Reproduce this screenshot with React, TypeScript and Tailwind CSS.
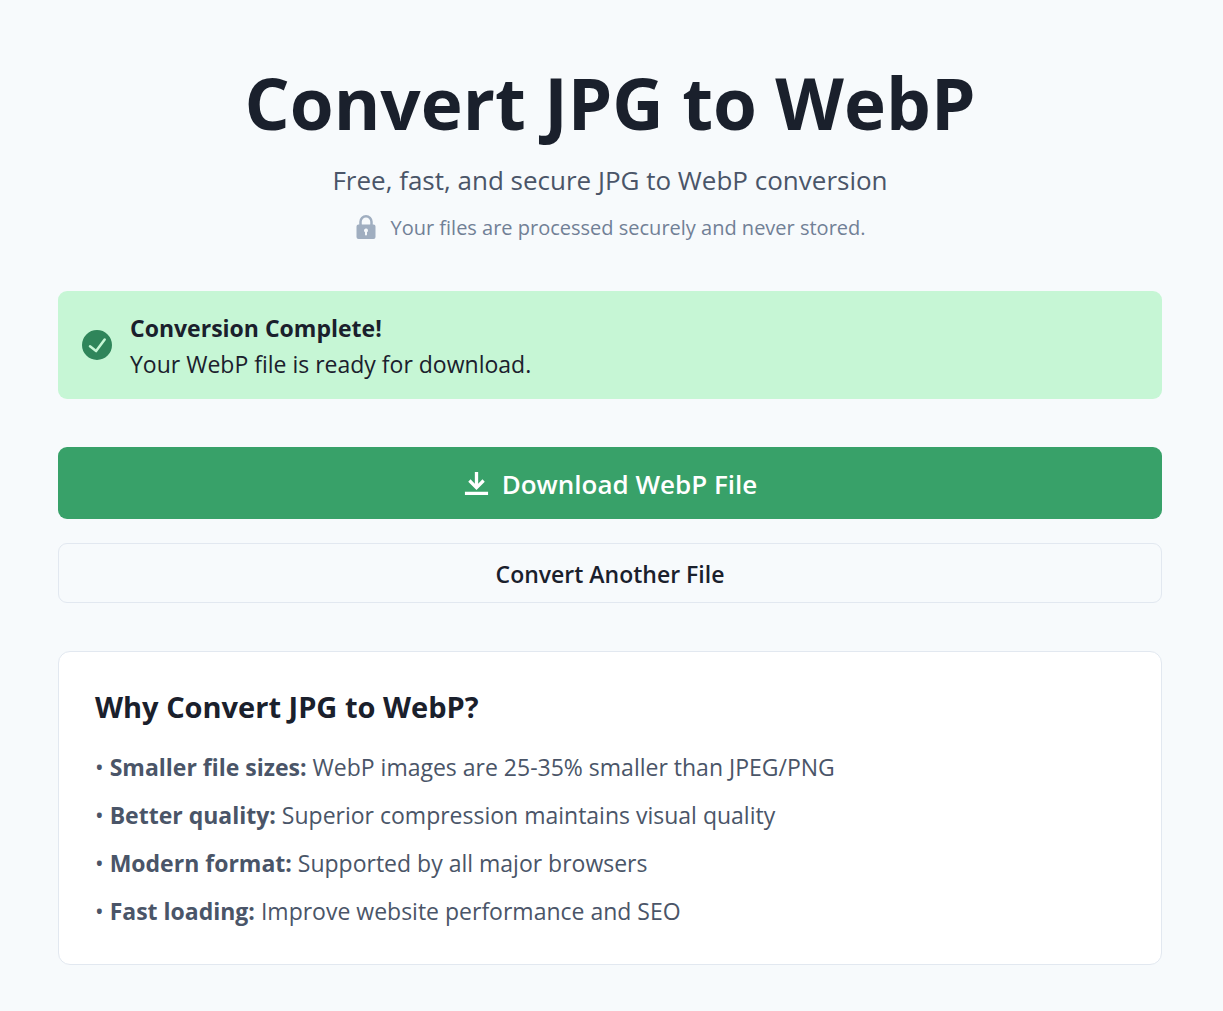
const benefits = [
  { label: 'Smaller file sizes:', text: 'WebP images are 25-35% smaller than JPEG/PNG' },
  { label: 'Better quality:', text: 'Superior compression maintains visual quality' },
  { label: 'Modern format:', text: 'Supported by all major browsers' },
  { label: 'Fast loading:', text: 'Improve website performance and SEO' },
];

function LockIcon() {
  return (
    <svg viewBox="0 0 24 24" className="size-6 shrink-0 text-[#a0aec0]" fill="currentColor" aria-hidden="true">
      <path d="M19.5,9.5h-.75V6.75a6.75,6.75,0,0,0-13.5,0V9.5H4.5a2,2,0,0,0-2,2V22a2,2,0,0,0,2,2h15a2,2,0,0,0,2-2V11.5A2,2,0,0,0,19.5,9.5Zm-9.5,6a2,2,0,1,1,3,1.723V19.5a1,1,0,0,1-2,0V17.223A1.994,1.994,0,0,1,10,15.5ZM7.75,6.75a4.25,4.25,0,0,1,8.5,0V9a.5.5,0,0,1-.5.5h-7.5A.5.5,0,0,1,7.75,9Z" />
    </svg>
  );
}

function CheckCircleIcon() {
  return (
    <svg viewBox="0 0 24 24" className="size-[30px] shrink-0 text-[#2f855a]" fill="currentColor" aria-hidden="true">
      <path d="M12,0A12,12,0,1,0,24,12,12.014,12.014,0,0,0,12,0Zm6.927,8.2-6.845,9.289a1.011,1.011,0,0,1-1.43.188L5.764,13.769a1,1,0,1,1,1.25-1.562l4.076,3.261,6.227-8.451A1,1,0,1,1,18.927,8.2Z" />
    </svg>
  );
}

function DownloadIcon() {
  return (
    <svg viewBox="0 0 14 14" className="size-[27px] shrink-0" fill="currentColor" aria-hidden="true">
      <path d="M11.2857,6.05714 L10.08571,4.85714 L7.85714,7.14786 L7.85714,1 L6.14286,1 L6.14286,7.14786 L3.91429,4.85714 L2.71429,6.05714 L7,10.42857 L11.2857,6.05714 Z M1,11.2857 L1,13 L13,13 L13,11.2857 L1,11.2857 Z" />
    </svg>
  );
}

export default function App() {
  return (
    <main className="min-h-screen bg-[#f7fafc] pt-[60px] pr-[61px] pb-[46px] pl-[58px] font-['Open_Sans','Noto_Sans',sans-serif] text-[#1a202c]">
      <header className="flex flex-col items-center text-center">
        <h1 className="text-[71px] leading-[86px] font-bold">Convert JPG to WebP</h1>
        <p className="mt-3 text-[26px] leading-[45px] text-[#4a5568]">
          Free, fast, and secure JPG to WebP conversion
        </p>
        <p className="mt-[11px] flex items-center gap-3 text-[20px] leading-6 text-[#718096]">
          <LockIcon />
          <span className="pt-0.5">Your files are processed securely and never stored.</span>
        </p>
      </header>

      <section role="status" className="mt-[51px] flex items-center gap-[18px] rounded-[9px] bg-[#c6f6d5] px-6 py-[17px]">
        <CheckCircleIcon />
        <div className="pt-0.5 text-[23px] leading-9">
          <p className="font-bold">Conversion Complete!</p>
          <p>Your WebP file is ready for download.</p>
        </div>
      </section>

      <div className="mt-12 flex flex-col gap-6">
        <button type="button" className="flex h-[72px] items-center justify-center gap-3 rounded-[9px] bg-[#38a169] text-[26px] font-semibold text-white">
          <DownloadIcon />
          <span className="pt-0.5">Download WebP File</span>
        </button>
        <button type="button" className="h-[60px] rounded-[9px] border border-[#e2e8f0] pt-0.5 text-[23px] font-semibold">
          Convert Another File
        </button>
      </div>

      <section className="mt-12 rounded-xl border border-[#e2e8f0] bg-white px-9 pt-[37px] pb-[35px]">
        <h2 className="text-[29px] leading-9 font-bold">Why Convert JPG to WebP?</h2>
        <ul className="mt-6 flex flex-col gap-3 text-[23px] leading-9 text-[#4a5568]">
          {benefits.map((b) => (
            <li key={b.label}>
              • <strong className="font-bold">{b.label}</strong> {b.text}
            </li>
          ))}
        </ul>
      </section>
    </main>
  );
}
